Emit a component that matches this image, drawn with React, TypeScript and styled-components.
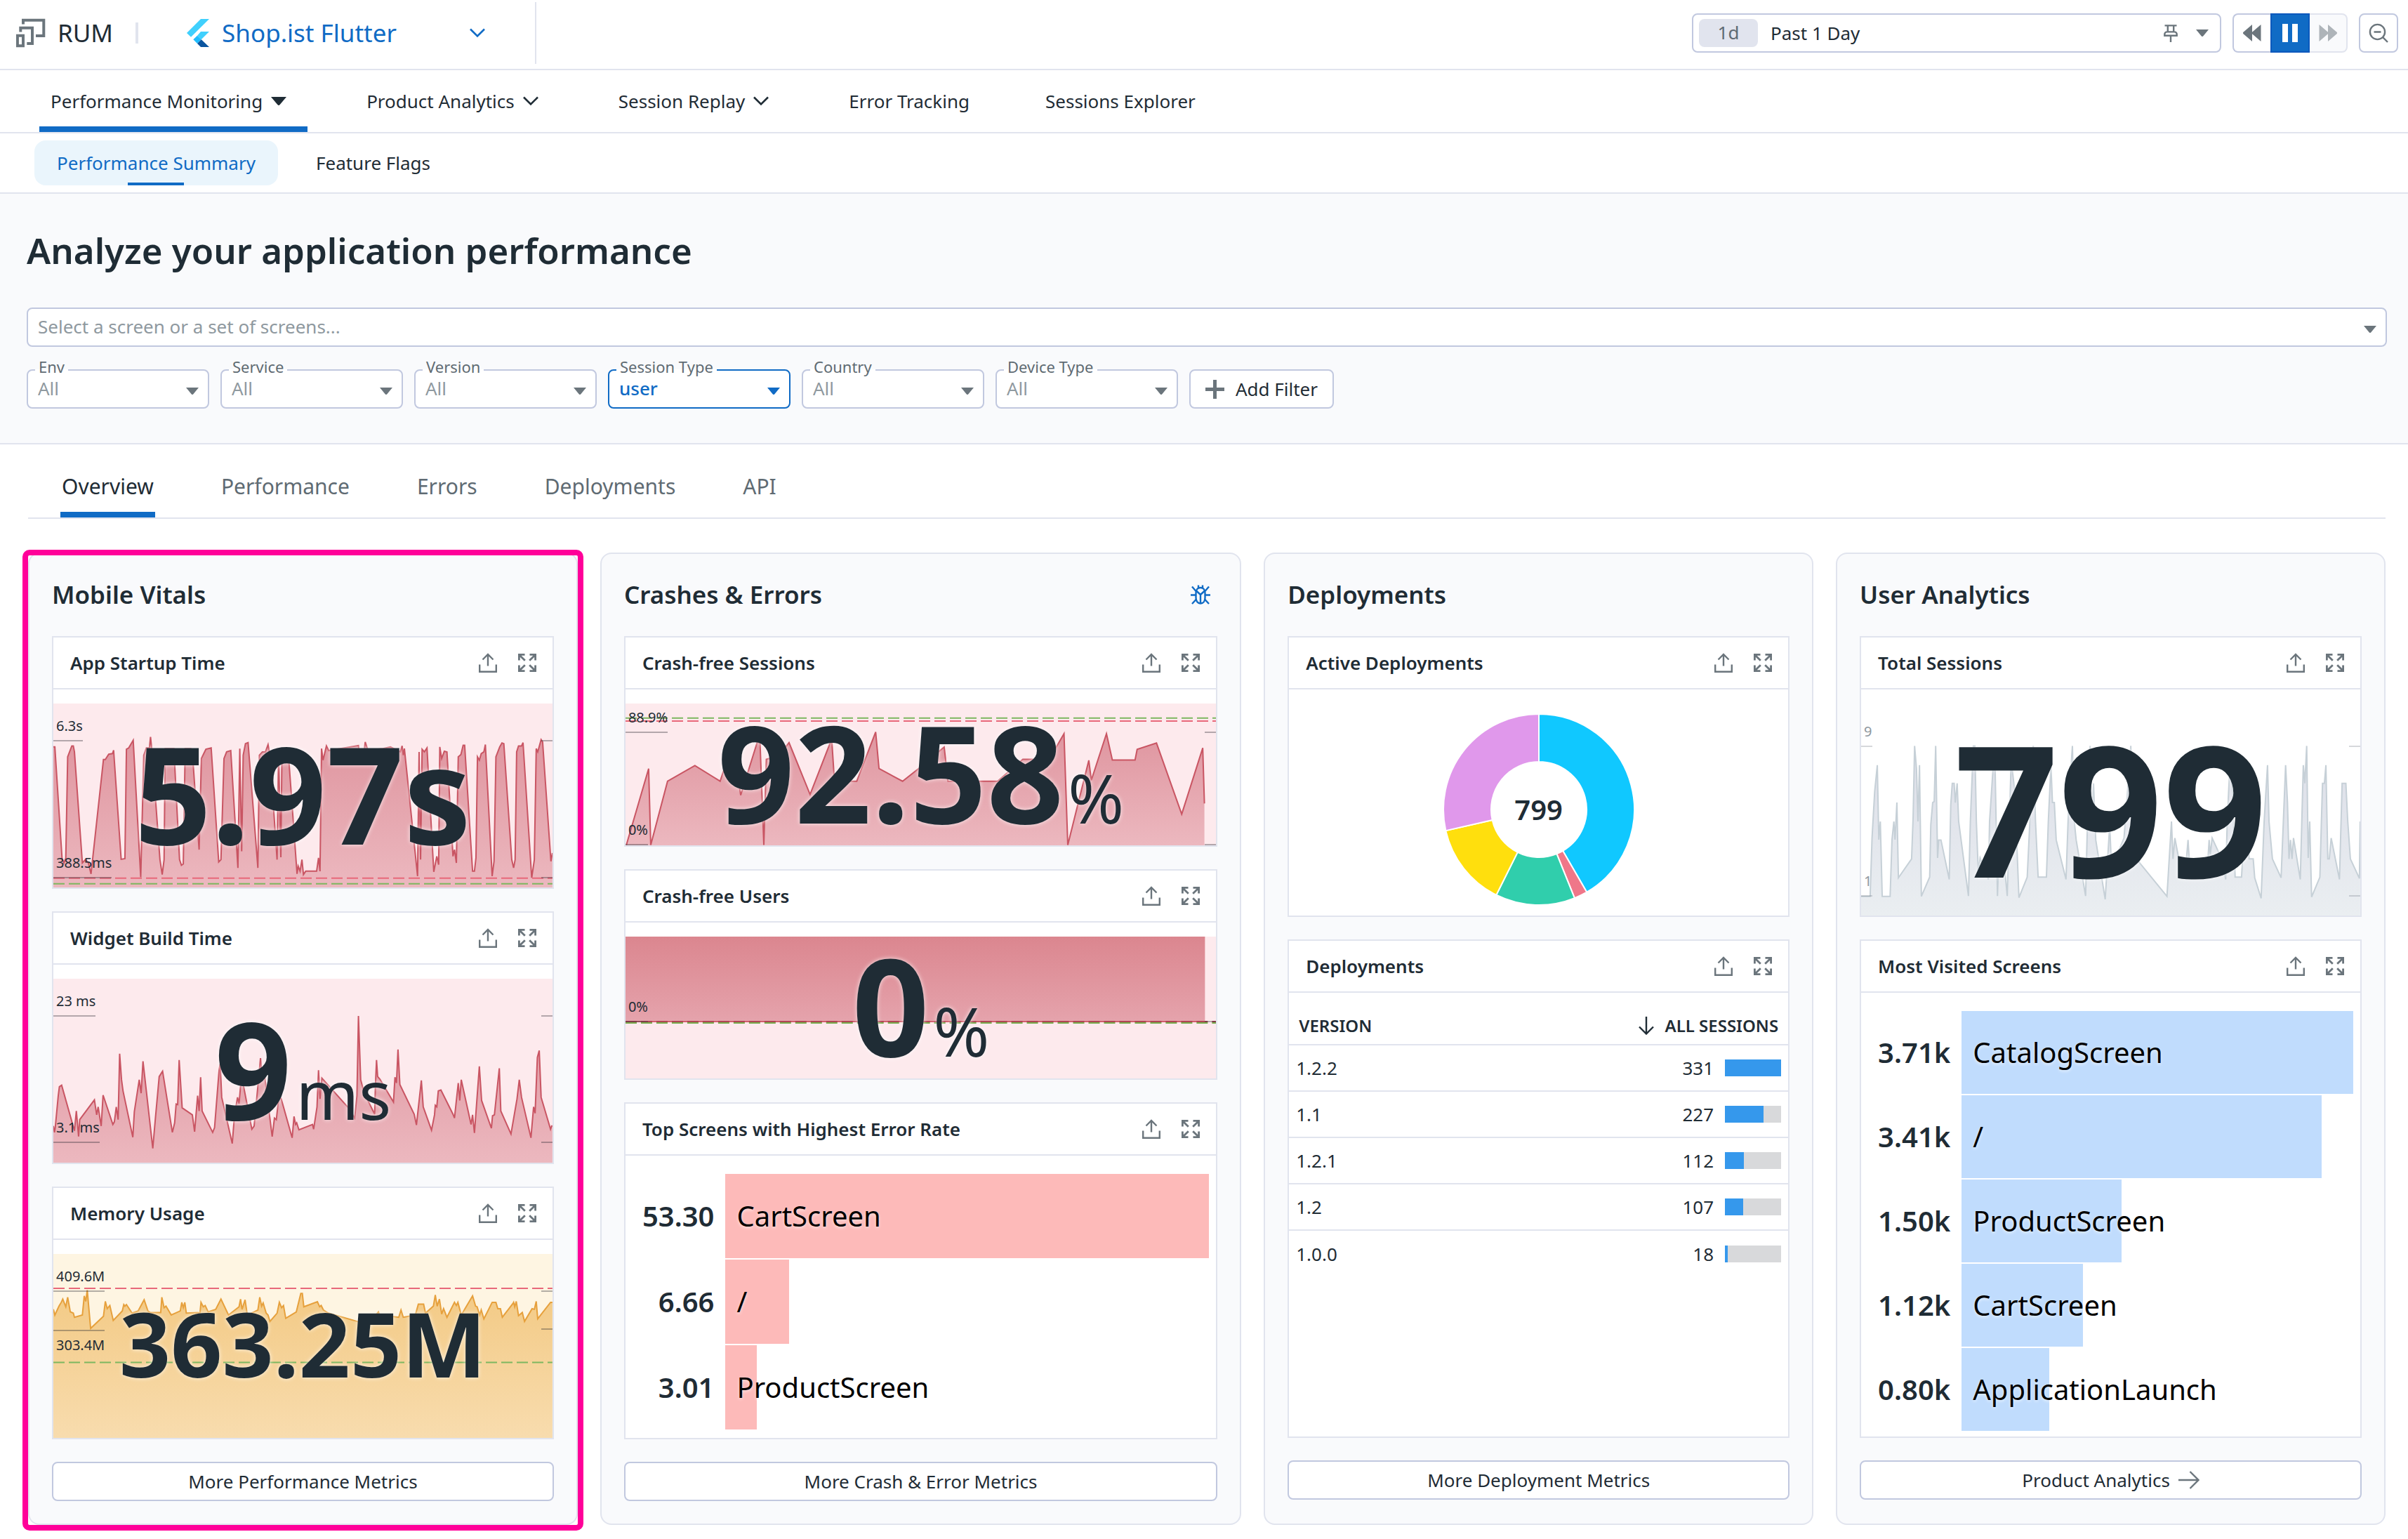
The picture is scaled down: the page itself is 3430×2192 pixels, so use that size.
import React, { useId } from "react";
import styled, { createGlobalStyle, css } from "styled-components";

const color = {
  ink: "#1f2c35",
  inkSoft: "#5f6b73",
  icon: "#6b757c",
  placeholder: "#8f999f",
  line: "#e1e4ee",
  control: "#c1c8df",
  blue: "#106bc5",
  blueTint: "#eaf5fc",
  surface: "#f9fafc",
  pink: "#ff0099",
};

const GlobalStyle = createGlobalStyle`
  *, *::before, *::after { box-sizing: border-box; }
  body {
    margin: 0;
    background: #fff;
    color: ${color.ink};
    font-family: "Noto Sans", "Open Sans", sans-serif;
    font-size: 26px;
    line-height: 36px;
  }
  button, select { font: inherit; color: inherit; }
  h1, h2, h3, p { margin: 0; }
  svg { display: block; flex: none; }
`;

/* ---------- icons ---------- */

const RumIcon = () => (
  <svg width="43" height="42" viewBox="0 0 43 42" fill="none" stroke={color.icon} strokeWidth="4" aria-hidden="true">
    <path d="M10 8.5V2.7h29.3V25H28" />
    <path d="M6.3 19.5v-5.8H23V36h-7.7" />
    <path d="M1.9 24.7H10v14.6H1.9z" />
  </svg>
);

const FlutterIcon = () => (
  <svg width="32" height="40" viewBox="0 0 32 40" aria-hidden="true">
    <path fill="#40d0fd" d="M20 0h12L6 25.7 0 20zM20 18h12L20.7 29.3 15 23.7z" />
    <path fill="#1fbcfd" d="M15 23.7l5.7 5.6L15 35l-5.7-5.7z" />
    <path fill="#0b559f" d="M20.7 29.3L32 40H20l-5-5z" />
  </svg>
);

const Chevron = ({ size = 22 }: { size?: number }) => (
  <svg width={size} height="14" viewBox="0 0 22 14" fill="none" stroke="currentColor" strokeWidth="2.6" aria-hidden="true">
    <path d="M1 1.5l10 10 10-10" />
  </svg>
);

const Caret = ({ width = 18 }: { width?: number }) => (
  <svg width={width} height={width === 18 ? 10 : 12} viewBox="0 0 18 10" preserveAspectRatio="none" fill="currentColor" aria-hidden="true">
    <path d="M0 0h18l-7.6 9.2a1.8 1.8 0 0 1-2.8 0z" />
  </svg>
);

const PinIcon = () => (
  <svg width="20" height="25" viewBox="0 0 20 25" fill="none" stroke="currentColor" strokeWidth="2.4" aria-hidden="true">
    <path d="M1.5 1.4h17M5.8 1.4v9M14.2 1.4v9M10 16v9M1.3 15.8v-2c0-2 1.600-3.400 3.600-3.400h10.200c2 0 3.600 1.400 3.600 3.400v2z" />
  </svg>
);

const RewindIcon = () => (
  <svg width="26" height="24" viewBox="0 0 26 24" fill="currentColor" aria-hidden="true">
    <path d="M13 0v24L.5 13.200a1.600 1.600 0 0 1 0-2.400zM25.500 0v24L13 13.200a1.600 1.600 0 0 1 0-2.400z" />
  </svg>
);

const ForwardIcon = () => (
  <svg width="26" height="24" viewBox="0 0 26 24" fill="currentColor" aria-hidden="true">
    <path d="M13 0v24l12.500-10.800a1.600 1.600 0 0 0 0-2.400zM.5 0v24L13 13.200a1.600 1.600 0 0 0 0-2.400z" />
  </svg>
);

const PauseIcon = () => (
  <svg width="22" height="26" viewBox="0 0 22 26" fill="currentColor" aria-hidden="true">
    <path d="M0 0h8v26H0zM14 0h8v26h-8z" />
  </svg>
);

const ZoomOutIcon = () => (
  <svg width="28" height="28" viewBox="0 0 28 28" fill="none" stroke="currentColor" strokeWidth="2.4" aria-hidden="true">
    <circle cx="12.500" cy="12.500" r="10.600" />
    <path d="M7.500 12.500h10M20.200 20.200l6.800 6.800" />
  </svg>
);

const PlusIcon = () => (
  <svg width="27" height="27" viewBox="0 0 27 27" stroke={color.icon} strokeWidth="5" aria-hidden="true">
    <path d="M13.500 0v27M0 13.500h27" />
  </svg>
);

const ShareIcon = () => (
  <svg width="26" height="28" viewBox="0 0 26 28" fill="none" stroke="currentColor" strokeWidth="2.400" aria-hidden="true">
    <path d="M13 18.500V2M5.500 9.500L13 2l7.500 7.500M1.200 16.500v10.200h23.600V16.500" />
  </svg>
);

const ExpandIcon = () => (
  <svg width="26" height="26" viewBox="0 0 26 26" fill="none" stroke="currentColor" strokeWidth="2.800" aria-hidden="true">
    <path d="M1.400 9.500V1.400h8.100M1.400 1.400l8.400 8.400M16.500 1.400h8.100v8.100M24.600 1.400l-8.400 8.400M1.400 16.500v8.100h8.100M1.400 24.600l8.400-8.400M24.600 16.500v8.100h-8.100M24.600 24.600l-8.400-8.400" />
  </svg>
);

const BugIcon = () => (
  <svg width="28" height="28" viewBox="0 0 28 28" fill="none" stroke="currentColor" strokeWidth="2.400" aria-hidden="true">
    <path d="M7.500 11.500c0-4.500 2.600-7.500 6.500-7.500s6.500 3 6.500 7.500v7c0 4.600-2.600 8-6.500 8s-6.500-3.400-6.500-8z" />
    <path d="M14 14v12M8 8.500l6 5.500 6-5.500M11 4.500V.5M17 4.500V.5M0 14.500h7.500M20.500 14.500H28M7.500 9L2 2.500M20.500 9L26 2.500M8 20.500l-6 6.500M20 20.500l6 6.500" />
  </svg>
);

const SortArrow = () => (
  <svg width="22" height="26" viewBox="0 0 22 26" fill="none" stroke="currentColor" strokeWidth="2.400" aria-hidden="true">
    <path d="M11 0v24.500M1 14.500l10 10 10-10" />
  </svg>
);

const ArrowRight = () => (
  <svg width="30" height="26" viewBox="0 0 30 26" fill="none" stroke={color.icon} strokeWidth="2.400" aria-hidden="true">
    <path d="M0 13h28.500M16.500 1l12 12-12 12" />
  </svg>
);

/* ---------- top bar ---------- */

const TopBar = styled.header`
  display: flex;
  align-items: center;
  height: 100px;
  padding: 0 14px 4px 23px;
  border-bottom: 2px solid ${color.line};
`;

const Product = styled.div`
  display: flex;
  align-items: center;
  gap: 16px;
  padding-right: 32px;
  font-size: 35px;
`;

const Divider = styled.span`
  width: 4px;
  height: 30px;
  background: ${color.line};
`;

const AppPicker = styled.button`
  display: flex;
  align-items: center;
  gap: 18px;
  width: 567px;
  height: 88px;
  padding: 0 70px 0 69px;
  border: 0;
  border-right: 2px solid ${color.line};
  background: none;
  color: ${color.blue};
  font-size: 35px;
  text-align: left;
`;

const AppName = styled.span`
  flex: 1;
`;

const TimeControls = styled.div`
  display: flex;
  gap: 16px;
  margin-left: auto;
`;

const TimeRange = styled.button`
  display: flex;
  align-items: center;
  width: 754px;
  height: 56px;
  padding: 0 16px 0 8px;
  border: 2px solid ${color.control};
  border-radius: 8px;
  background: #fff;
`;

const RangeBadge = styled.span`
  width: 84px;
  height: 40px;
  margin-right: 18px;
  border-radius: 8px;
  background: ${color.line};
  color: ${color.inkSoft};
  line-height: 38px;
  text-align: center;
`;

const RangeTools = styled.span`
  display: flex;
  align-items: center;
  gap: 26px;
  margin-left: auto;
  color: ${color.icon};
`;

const Playback = styled.div`
  display: flex;
  width: 164px;
`;

const IconButton = styled.button<{ $tone?: "primary" | "disabled"; $edge?: "left" | "right" }>`
  display: flex;
  flex: 1;
  align-items: center;
  justify-content: center;
  min-width: 56px;
  height: 56px;
  padding: 0;
  border: 2px solid ${color.control};
  border-radius: 8px;
  background: #fff;
  color: ${color.icon};
  ${({ $edge }) => $edge === "left" && css`border-right: 0; border-radius: 8px 0 0 8px; min-width: 52px;`}
  ${({ $edge }) => $edge === "right" && css`border-left: 0; border-radius: 0 8px 8px 0; min-width: 52px;`}
  ${({ $tone }) => $tone === "primary" && css`border-color: #0c58bd; border-radius: 0; background: ${color.blue}; color: #fff;`}
  ${({ $tone }) => $tone === "disabled" && css`border-color: ${color.line}; background: ${color.surface}; color: #aeb4b9;`}
`;

/* ---------- navigation ---------- */

const MainNav = styled.nav`
  display: flex;
  gap: 68px;
  height: 90px;
  padding: 0 56px;
  border-bottom: 2px solid ${color.line};
`;

const NavLink = styled.a<{ $active?: boolean }>`
  display: flex;
  align-items: center;
  gap: 12px;
  padding: 0 30px 0 16px;
  border-bottom: 8px solid ${({ $active }) => ($active ? color.blue : "transparent")};
  border-top: 8px solid transparent;
  color: ${color.ink};
  text-decoration: none;
`;

const PlainNavLink = styled(NavLink)`
  padding-right: 24px;
`;

const SubNav = styled.nav`
  display: flex;
  align-items: center;
  gap: 22px;
  height: 86px;
  padding: 0 49px;
  border-bottom: 2px solid ${color.line};
`;

const SubLink = styled.a<{ $active?: boolean }>`
  display: flex;
  flex-direction: column;
  align-items: center;
  height: 64px;
  padding: 14px 32px 0;
  border-radius: 16px;
  text-decoration: none;
  color: ${({ $active }) => ($active ? color.blue : color.ink)};
  background: ${({ $active }) => ($active ? color.blueTint : "none")};
  &::after {
    content: "";
    width: 80px;
    height: 4px;
    margin-top: auto;
    background: ${({ $active }) => ($active ? color.blue : "none")};
  }
`;

/* ---------- filters ---------- */

const FilterSection = styled.section`
  height: 357px;
  padding: 0 30px 0 38px;
  border-bottom: 2px solid ${color.line};
  background: ${color.surface};
`;

const PageTitle = styled.h1`
  padding: 44px 0 46px;
  font-size: 51px;
  font-weight: 600;
  line-height: 72px;
`;

const Field = styled.div<{ $active?: boolean; $narrow?: boolean }>`
  position: relative;
  display: flex;
  width: ${({ $narrow }) => ($narrow ? "260px" : "100%")};
  color: ${({ $active }) => ($active ? color.blue : color.icon)};
  & > svg {
    position: absolute;
    right: 15px;
    top: 26px;
    pointer-events: none;
  }
`;

const Select = styled.select<{ $active?: boolean }>`
  width: 100%;
  height: 56px;
  padding: 0 40px 2px 14px;
  appearance: none;
  border: 2px solid ${({ $active }) => ($active ? color.blue : color.control)};
  border-radius: 8px;
  background: #fff;
  color: ${({ $active }) => ($active ? color.blue : color.placeholder)};
  font-weight: ${({ $active }) => ($active ? 500 : 400)};
`;

const FieldLabel = styled.label`
  position: absolute;
  top: -16px;
  left: 12px;
  padding: 0 5px;
  background: linear-gradient(${color.surface} 16px, #fff 16px);
  color: ${color.inkSoft};
  font-size: 22px;
  line-height: 24px;
`;

const FilterRow = styled.div`
  display: flex;
  gap: 16px;
  margin-top: 32px;
`;

const AddFilter = styled.button`
  display: flex;
  align-items: center;
  justify-content: center;
  gap: 16px;
  width: 206px;
  height: 56px;
  padding: 0;
  border: 2px solid ${color.control};
  border-radius: 8px;
  background: #fff;
`;

/* ---------- content ---------- */

const Content = styled.main`
  padding: 0 32px 20px 40px;
`;

const Tabs = styled.div`
  display: flex;
  gap: 92px;
  height: 106px;
  margin-bottom: 48px;
  padding: 0 46px;
  border-bottom: 2px solid ${color.line};
`;

const Tab = styled.button<{ $active?: boolean }>`
  padding: 24px 2px 0;
  border: 0;
  border-bottom: 8px solid ${({ $active }) => ($active ? color.blue : "transparent")};
  background: none;
  color: ${({ $active }) => ($active ? color.ink : color.inkSoft)};
  font-size: 30px;
`;

const Panels = styled.div`
  display: grid;
  grid-template-columns: 6fr 7fr 6fr 6fr;
  gap: 32px;
`;

const Panel = styled.section<{ $highlighted?: boolean }>`
  position: relative;
  display: flex;
  flex-direction: column;
  gap: 32px;
  min-width: 0;
  padding: 0 32px 32px;
  border: 2px solid ${color.line};
  border-radius: 16px;
  background: ${color.surface};
  ${({ $highlighted }) =>
    $highlighted &&
    css`
      &::after {
        content: "";
        position: absolute;
        inset: -6px -10px -10px;
        border: 8px solid ${color.pink};
        border-radius: 10px;
        pointer-events: none;
      }
    `}
`;

const PanelHeader = styled.header`
  display: flex;
  align-items: center;
  justify-content: space-between;
  height: 117px;
  margin-bottom: -32px;
  padding: 0 10px 2px 0;
  color: ${color.blue};
`;

const PanelTitle = styled.h2`
  color: ${color.ink};
  font-size: 35px;
  font-weight: 600;
  line-height: 48px;
`;

const PanelAction = styled.button`
  padding: 0;
  border: 0;
  background: none;
  color: ${color.blue};
`;

const CardBox = styled.article<{ $minHeight?: number }>`
  min-height: ${({ $minHeight }) => ($minHeight ? `${$minHeight}px` : "auto")};
  border: 2px solid ${color.line};
  background: #fff;
`;

const CardHeader = styled.header`
  display: flex;
  align-items: center;
  gap: 30px;
  height: 74px;
  padding: 0 23px 0 24px;
  border-bottom: 2px solid ${color.line};
`;

const CardTitle = styled.h3`
  flex: 1;
  font-size: 26px;
  font-weight: 600;
`;

const CardTool = styled.button`
  padding: 0;
  border: 0;
  background: none;
  color: ${color.icon};
`;

const MoreButton = styled.button`
  display: flex;
  align-items: center;
  justify-content: center;
  gap: 12px;
  height: 56px;
  border: 2px solid ${color.control};
  border-radius: 8px;
  background: #fff;
`;

/* ---------- metric chart ---------- */

const ChartFrame = styled.div<{ $height: number; $background: string }>`
  position: relative;
  display: grid;
  height: ${({ $height }) => $height}px;
  margin-top: 20px;
  background: ${({ $background }) => $background};
  & > * { grid-area: 1 / 1; }
`;

const Plot = styled.svg`
  width: 100%;
  height: 100%;
  min-height: 0;
`;

const tickColor = (muted?: boolean) => (muted ? "rgba(90, 100, 110, 0.25)" : "rgba(40, 40, 50, 0.35)");

const AxisLabel = styled.span<{ $y: number; $below?: boolean; $muted?: boolean }>`
  position: absolute;
  left: 0;
  top: ${({ $y, $below }) => ($below ? $y : $y - 34)}px;
  padding: ${({ $below }) => ($below ? "8px 0 0 4px" : "0 0 8px 4px")};
  color: ${({ $muted }) => ($muted ? color.placeholder : color.ink)};
  font-size: 20px;
  line-height: 24px;
  border: 0 solid ${({ $muted }) => tickColor($muted)};
  border-${({ $below }) => ($below ? "top" : "bottom")}-width: 2px;
`;

const EndTick = styled.span<{ $y: number; $muted?: boolean }>`
  position: absolute;
  right: 0;
  top: ${({ $y }) => $y - 2}px;
  width: 16px;
  height: 2px;
  background: ${({ $muted }) => tickColor($muted)};
`;

const Metric = styled.p<{ $size: number }>`
  position: relative;
  display: flex;
  align-items: baseline;
  justify-content: center;
  align-self: center;
  padding-bottom: 8px;
  font-size: ${({ $size }) => $size}px;
  font-weight: 700;
  line-height: 1;
  text-shadow: 0 0 6px rgba(255, 255, 255, 0.8);
`;

const Unit = styled.span`
  margin-left: 6px;
  font-size: 96px;
  font-weight: 400;
`;

type Theme = "red" | "amber" | "grey";

const themes: Record<Theme, { background: string; line: string; top: string; bottom: string }> = {
  red: { background: "#fdeaed", line: "#c95563", top: "#df959f", bottom: "#ecb8bf" },
  amber: { background: "#fef5e2", line: "#e6a03c", top: "#f3ca85", bottom: "#f8dcae" },
  grey: { background: "#fff", line: "#c6d0d7", top: "#dcdee8", bottom: "#eaeef1" },
};

interface AxisMark { label: string; y: number; below?: boolean }
interface Threshold { y: number; color: string }

interface ChartProps {
  theme: Theme;
  height: number;
  /** x, y, width and height of the data's own coordinate space */
  view: [number, number, number, number];
  points: string;
  marks: AxisMark[];
  thresholds?: Threshold[];
  value: string;
  unit?: string;
  size: number;
}

function MetricChart({ theme, height, view, points, marks, thresholds = [], value, unit, size }: ChartProps) {
  const id = useId();
  const t = themes[theme];
  const [x, y, w, h] = view;
  const list = points.trim().split(/\s+/);
  const firstX = list[0].split(",")[0];
  const lastX = list[list.length - 1].split(",")[0];
  const muted = theme === "grey";
  return (
    <ChartFrame $height={height} $background={t.background}>
      <Plot viewBox={view.join(" ")} preserveAspectRatio="none" aria-hidden="true">
        <defs>
          <linearGradient id={id} x1="0" y1="0" x2="0" y2="1">
            <stop offset="0" stopColor={t.top} />
            <stop offset="1" stopColor={t.bottom} />
          </linearGradient>
        </defs>
        <polygon points={`${firstX},${y + h} ${points} ${lastX},${y + h}`} fill={`url(#${id})`} />
        <polyline points={points} fill="none" stroke={t.line} strokeWidth="2" vectorEffect="non-scaling-stroke" />
        {thresholds.map((line) => (
          <path key={line.y} d={`M${x} ${line.y}h${w}`} stroke={line.color} strokeWidth="2" strokeDasharray="16 6" vectorEffect="non-scaling-stroke" />
        ))}
      </Plot>
      {marks.map((m) => (
        <React.Fragment key={m.label}>
          <AxisLabel $y={m.y} $below={m.below} $muted={muted}>{m.label}</AxisLabel>
          <EndTick $y={m.y} $muted={muted} />
        </React.Fragment>
      ))}
      <Metric $size={size}>
        {value}
        {unit && <Unit>{unit}</Unit>}
      </Metric>
    </ChartFrame>
  );
}

const startupPoints =
  "105,625 109,625 128,960 133,975 138,960 143,655 154,622 158,622 161,640 182,975 190,965 198,975 205,1008 238,663 243,663 252,647 262,645 265,635 285,964 295,962 299,632 305,628 317,605 337,1018 345,650 352,628 360,628 363,595 367,640 388,965 394,1010 399,965 402,630 425,630 440,965 445,982 450,978 455,630 470,630 474,640 492,935 498,660 510,632 524,628 544,972 550,965 558,660 565,640 576,636 595,990 600,630 605,940 609,650 615,615 622,612 648,990 652,650 660,640 668,640 675,618 680,650 699,965 703,640 709,958 712,632 728,630 752,1008 755,985 760,1000 765,965 769,1010 775,1000 804,1000 809,960 813,1000 817,630 821,665 830,622 836,636 915,621 918,650 930,640 933,610 940,635 980,630 1000,625 1026,640 1031,622 1034,650 1037,630 1072,1015 1076,640 1080,965 1084,632 1090,640 1097,628 1115,1002 1123,955 1128,980 1131,625 1136,660 1143,638 1150,640 1166,955 1170,935 1175,975 1180,655 1187,648 1193,620 1197,620 1218,1000 1223,1000 1227,960 1231,655 1236,665 1241,645 1248,640 1252,618 1270,1015 1275,970 1280,655 1290,625 1296,613 1301,615 1322,965 1327,990 1331,965 1335,640 1340,622 1348,622 1352,612 1375,1020 1382,965 1387,630 1391,640 1400,603 1404,610 1426,970 1430,945";

const widgetPoints =
  "105,275 108,295 110,280 118,180 121,152 127,147 161,290 166,228 172,308 175,255 214,193 220,240 224,215 232,275 237,178 263,270 267,262 272,215 277,255 281,48 286,130 290,165 316,310 320,230 333,130 338,172 343,72 369,345 376,250 386,120 395,103 421,295 427,265 431,206 435,208 439,68 447,218 474,240 480,293 488,180 492,228 496,122 500,228 528,295 533,280 545,100 548,80 552,185 580,330 586,240 594,185 598,205 602,150 606,120 610,150 632,285 638,275 655,62 658,110 663,90 686,308 692,250 697,255 704,180 710,190 739,312 744,245 748,270 751,265 757,287 793,270 796,285 805,215 809,100 813,190 818,125 890,220 905,250 911,180 915,-70 921,130 930,170 958,238 960,150 963,68 966,120 972,128 1008,200 1012,122 1016,140 1020,35 1025,145 1063,238 1069,272 1082,132 1087,215 1109,288 1117,240 1119,210 1123,215 1127,165 1134,162 1166,238 1170,250 1180,140 1184,195 1188,130 1214,270 1218,240 1223,297 1236,88 1242,195 1268,282 1271,243 1276,240 1289,94 1293,228 1320,300 1336,190 1342,130 1348,185 1373,312 1380,215 1384,235 1390,60 1395,38 1400,185 1425,285 1428,275 1430,275";

const memoryPoints =
  "105,850 109,868 120,840 126,828 130,818 138,842 143,812 150,858 158,862 161,875 182,868 187,808 191,825 195,790 204,910 238,872 243,825 248,848 255,838 264,885 288,855 292,835 295,840 299,835 314,862 330,855 346,820 356,855 362,860 390,860 393,812 399,845 404,840 418,868 442,855 446,828 450,845 454,828 458,862 490,860 494,865 497,828 503,842 508,838 516,858 536,850 550,818 570,868 598,842 602,818 606,850 614,820 620,868 648,852 653,812 658,840 662,830 670,862 675,868 680,888 699,862 705,828 711,845 716,838 722,878 750,858 762,800 766,800 770,842 806,826 812,842 816,838 822,852 835,862 912,888 916,890 930,875 960,870 968,858 973,875 1000,872 1022,875 1028,852 1034,875 1066,868 1074,834 1088,834 1093,862 1114,840 1119,805 1124,840 1130,818 1136,865 1141,848 1150,875 1170,828 1175,838 1179,828 1188,868 1218,808 1226,840 1230,842 1237,868 1241,852 1248,880 1270,828 1280,828 1285,848 1292,848 1297,875 1325,832 1327,828 1330,842 1334,825 1340,870 1350,860 1356,888 1376,848 1382,850 1387,825 1391,880 1425,828 1430,828";

const crashSessionPoints =
  "87,920 140,690 145,920 185,728 250,681 310,728 340,612 359,770 398,612 405,612 414,920 420,662 450,650 474,612 524,768 572,612 576,612 582,728 635,728 680,580 688,690 744,728 782,690 843,625 852,728 970,728 1030,662 1055,662 1080,690 1128,585 1137,920 1187,665 1193,725 1229,585 1243,664 1297,664 1302,632 1348,613 1408,827 1458,628 1462,795";

const totalSessionPoints =
  "114,1076 138,1076 143,900 150,760 157,680 161,905 165,850 170,1076 191,1076 196,905 201,850 204,905 209,793 213,1020 248,963 252,840 256,622 261,690 265,850 269,680 274,1076 296,1018 299,860 304,793 308,790 312,622 317,960 320,906 326,906 348,1025 352,800 356,735 361,735 364,793 369,735 373,850 399,1075 404,850 412,622 416,622 420,850 425,1000 430,960 452,1025 455,850 466,660 470,700 476,1075 483,850 488,906 502,1075 512,680 516,700 522,760 533,1080 555,1018 562,850 571,622 577,850 584,1018 606,1018 611,850 618,680 622,793 627,793 632,906 658,1025 665,800 675,622 680,850 685,906 710,1075 715,850 722,622 726,850 731,735 737,906 762,1085 774,860 780,1020 790,960 812,900 820,780 830,622 836,850 850,970 926,1076 938,850 942,963 947,900 957,960 970,1000 978,960 982,906 987,1000 1010,1000 1032,1015 1038,906 1041,950 1046,900 1070,960 1082,1025 1086,850 1093,680 1100,760 1107,1018 1124,1018 1130,900 1140,850 1144,963 1155,963 1159,1020 1176,1082 1184,850 1193,680 1197,850 1206,963 1229,1020 1235,850 1241,680 1246,793 1250,963 1254,906 1258,963 1262,900 1280,1025 1284,850 1288,680 1292,735 1297,622 1301,960 1305,850 1310,1078 1332,1018 1336,850 1339,735 1344,735 1348,680 1353,963 1357,963 1362,900 1384,1025 1391,735 1401,735 1406,850 1413,963 1437,1022 1439,850";

/* Crash-free users is flat at zero, so its area hangs from the top of the plot. */
function CrashFreeUsersChart() {
  const id = useId();
  return (
    <ChartFrame $height={202} $background={themes.red.background}>
      <Plot viewBox="0 0 842 202" preserveAspectRatio="none" aria-hidden="true">
        <defs>
          <linearGradient id={id} x1="0" y1="0" x2="0" y2="1">
            <stop offset="0" stopColor="#db868f" />
            <stop offset="1" stopColor="#e5a3ac" />
          </linearGradient>
        </defs>
        <path d="M0 0h826v121H0z" fill={`url(#${id})`} />
        <path d="M0 121h826" stroke="#d0606d" strokeWidth="2" />
        <path d="M0 121h842" stroke="#b04553" strokeWidth="2" strokeDasharray="16 6" />
        <path d="M0 123h842" stroke="#76ab4c" strokeWidth="2" strokeDasharray="16 6" />
      </Plot>
      <AxisLabel $y={122}>0%</AxisLabel>
      <EndTick $y={122} />
      <Metric $size={192}>0<Unit>%</Unit></Metric>
    </ChartFrame>
  );
}

/* ---------- top list ---------- */

const TopListBox = styled.ol`
  display: grid;
  grid-template-columns: auto 1fr;
  row-gap: 2px;
  margin: 0;
  padding: 26px 10px 8px 0;
  list-style: none;
`;

const TopListRow = styled.li<{ $height: number }>`
  display: grid;
  grid-column: 1 / -1;
  grid-template-columns: subgrid;
  align-items: center;
  height: ${({ $height }) => $height}px;
  font-size: 40px;
`;

const TopListValue = styled.span`
  padding: 0 16px 0 24px;
  font-weight: 600;
  text-align: right;
`;

const TopListTrack = styled.span`
  display: grid;
  align-items: center;
  height: 100%;
  & > * { grid-area: 1 / 1; }
`;

const TopListBar = styled.span<{ $fill: string }>`
  height: 100%;
  background: ${({ $fill }) => $fill};
`;

const TopListName = styled.span`
  padding-left: 16px;
  color: #000;
  text-shadow: 0 2px 4px rgba(255, 255, 255, 0.6);
`;

interface TopListItem { name: string; value: string; share: number }

function TopList({ items, fill, rowHeight }: { items: TopListItem[]; fill: string; rowHeight: number }) {
  return (
    <TopListBox>
      {items.map((item) => (
        <TopListRow key={item.name} $height={rowHeight}>
          <TopListValue>{item.value}</TopListValue>
          <TopListTrack>
            <TopListBar $fill={fill} style={{ width: `${item.share}%` }} />
            <TopListName>{item.name}</TopListName>
          </TopListTrack>
        </TopListRow>
      ))}
    </TopListBox>
  );
}

const errorScreens: TopListItem[] = [
  { name: "CartScreen", value: "53.30", share: 100 },
  { name: "/", value: "6.66", share: 13.2 },
  { name: "ProductScreen", value: "3.01", share: 6.4 },
];

const visitedScreens: TopListItem[] = [
  { name: "CatalogScreen", value: "3.71k", share: 100 },
  { name: "/", value: "3.41k", share: 92 },
  { name: "ProductScreen", value: "1.50k", share: 40.9 },
  { name: "CartScreen", value: "1.12k", share: 31 },
  { name: "ApplicationLaunch", value: "0.80k", share: 22.4 },
];

/* ---------- deployments ---------- */

const DonutFrame = styled.div`
  display: grid;
  place-items: center;
  height: 302px;
  margin-top: 20px;
  & > * { grid-area: 1 / 1; }
`;

const DonutTotal = styled.strong`
  font-size: 40px;
  font-weight: 600;
`;

const donutSlices = [
  { count: 331, fill: "#10c8ff" },
  { count: 18, fill: "#ef7789" },
  { count: 107, fill: "#30ceac" },
  { count: 112, fill: "#ffdf0d" },
  { count: 227, fill: "#e098eb" },
];

function Donut() {
  const total = donutSlices.reduce((sum, s) => sum + s.count, 0);
  const at = (turn: number, r: number) => {
    const a = turn * 2 * Math.PI;
    return `${(136 + r * Math.sin(a)).toFixed(2)} ${(136 - r * Math.cos(a)).toFixed(2)}`;
  };
  let from = 0;
  return (
    <DonutFrame>
      <svg width="272" height="272" viewBox="0 0 272 272" stroke="#fff" strokeWidth="2" aria-hidden="true">
        {donutSlices.map((s) => {
          const start = from;
          const end = (from += s.count / total);
          const large = end - start > 0.5 ? 1 : 0;
          return (
            <path
              key={s.fill}
              fill={s.fill}
              d={`M${at(start, 136)}A136 136 0 ${large} 1 ${at(end, 136)}L${at(end, 68)}A68 68 0 ${large} 0 ${at(start, 68)}Z`}
            />
          );
        })}
      </svg>
      <DonutTotal>799</DonutTotal>
    </DonutFrame>
  );
}

const Table = styled.table`
  width: 100%;
  margin-top: 20px;
  border-collapse: collapse;
  th {
    height: 54px;
    padding: 0 14px;
    border-bottom: 2px solid ${color.line};
    font-size: 24px;
    font-weight: 600;
    text-align: left;
  }
  td {
    height: 66px;
    padding: 0 10px;
    border-bottom: 2px solid ${color.line};
  }
  tbody tr:last-child td { border-bottom: 0; }
`;

const SortHeading = styled.span`
  display: flex;
  align-items: center;
  justify-content: flex-end;
  gap: 16px;
`;

const SessionCell = styled.span`
  display: flex;
  align-items: center;
  justify-content: flex-end;
  gap: 16px;
`;

const Meter = styled.span`
  width: 80px;
  height: 24px;
  background: #d8d9db;
`;

const MeterFill = styled.span`
  display: block;
  height: 100%;
  background: #3598ec;
`;

const deployments = [
  { version: "1.2.2", sessions: 331 },
  { version: "1.1", sessions: 227 },
  { version: "1.2.1", sessions: 112 },
  { version: "1.2", sessions: 107 },
  { version: "1.0.0", sessions: 18 },
];

function DeploymentsTable() {
  return (
    <Table>
      <thead>
        <tr>
          <th scope="col">VERSION</th>
          <th scope="col">
            <SortHeading><SortArrow />ALL SESSIONS</SortHeading>
          </th>
        </tr>
      </thead>
      <tbody>
        {deployments.map((d) => (
          <tr key={d.version}>
            <td>{d.version}</td>
            <td>
              <SessionCell>
                {d.sessions}
                <Meter><MeterFill style={{ width: `${(d.sessions / 331) * 100}%` }} /></Meter>
              </SessionCell>
            </td>
          </tr>
        ))}
      </tbody>
    </Table>
  );
}

/* ---------- composition ---------- */

function Card({ title, minHeight, children }: { title: string; minHeight?: number; children: React.ReactNode }) {
  return (
    <CardBox $minHeight={minHeight}>
      <CardHeader>
        <CardTitle>{title}</CardTitle>
        <CardTool type="button" aria-label={`Export ${title}`}><ShareIcon /></CardTool>
        <CardTool type="button" aria-label={`Expand ${title}`}><ExpandIcon /></CardTool>
      </CardHeader>
      {children}
    </CardBox>
  );
}

const filters = [
  { label: "Env", value: "All" },
  { label: "Service", value: "All" },
  { label: "Version", value: "All" },
  { label: "Session Type", value: "user", active: true },
  { label: "Country", value: "All" },
  { label: "Device Type", value: "All" },
];

const red = "#e8687a";
const green = "#7db760";

export default function App() {
  return (
    <>
      <GlobalStyle />
      <TopBar>
        <Product><RumIcon />RUM</Product>
        <Divider />
        <AppPicker type="button">
          <FlutterIcon />
          <AppName>Shop.ist Flutter</AppName>
          <Chevron size={24} />
        </AppPicker>
        <TimeControls>
          <TimeRange type="button">
            <RangeBadge>1d</RangeBadge>
            Past 1 Day
            <RangeTools><PinIcon /><Caret /></RangeTools>
          </TimeRange>
          <Playback>
            <IconButton type="button" $edge="left" aria-label="Back"><RewindIcon /></IconButton>
            <IconButton type="button" $tone="primary" aria-label="Pause"><PauseIcon /></IconButton>
            <IconButton type="button" $tone="disabled" $edge="right" aria-label="Forward" disabled><ForwardIcon /></IconButton>
          </Playback>
          <IconButton type="button" aria-label="Zoom out"><ZoomOutIcon /></IconButton>
        </TimeControls>
      </TopBar>

      <MainNav>
        <NavLink href="#monitoring" $active>Performance Monitoring <Caret width={22} /></NavLink>
        <NavLink href="#analytics">Product Analytics <Chevron /></NavLink>
        <NavLink href="#replay">Session Replay <Chevron /></NavLink>
        <PlainNavLink href="#errors">Error Tracking</PlainNavLink>
        <PlainNavLink href="#explorer">Sessions Explorer</PlainNavLink>
      </MainNav>

      <SubNav>
        <SubLink href="#summary" $active>Performance Summary</SubLink>
        <SubLink href="#flags">Feature Flags</SubLink>
      </SubNav>

      <FilterSection>
        <PageTitle>Analyze your application performance</PageTitle>
        <Field>
          <Select aria-label="Screens"><option>Select a screen or a set of screens...</option></Select>
          <Caret />
        </Field>
        <FilterRow>
          {filters.map((f) => {
            const id = `filter-${f.label.toLowerCase().replace(" ", "-")}`;
            return (
              <Field key={f.label} $narrow $active={f.active}>
                <Select id={id} $active={f.active}><option>{f.value}</option></Select>
                <FieldLabel htmlFor={id}>{f.label}</FieldLabel>
                <Caret />
              </Field>
            );
          })}
          <AddFilter type="button"><PlusIcon />Add Filter</AddFilter>
        </FilterRow>
      </FilterSection>

      <Content>
        <Tabs role="tablist">
          {["Overview", "Performance", "Errors", "Deployments", "API"].map((name, i) => (
            <Tab key={name} type="button" role="tab" aria-selected={i === 0} $active={i === 0}>{name}</Tab>
          ))}
        </Tabs>

        <Panels>
          <Panel $highlighted>
            <PanelHeader><PanelTitle>Mobile Vitals</PanelTitle></PanelHeader>
            <Card title="App Startup Time">
              <MetricChart
                theme="red" height={262} view={[105, 494, 1325, 555]} points={startupPoints}
                marks={[{ label: "6.3s", y: 54 }, { label: "388.5ms", y: 249 }]}
                thresholds={[{ y: 1021, color: red }, { y: 1038, color: green }]}
                value="5.97s" size={192}
              />
            </Card>
            <Card title="Widget Build Time">
              <MetricChart
                theme="red" height={262} view={[105, -187, 1325, 577]} points={widgetPoints}
                marks={[{ label: "23 ms", y: 54 }, { label: "3.1 ms", y: 234 }]}
                value="9" unit="ms" size={192}
              />
            </Card>
            <Card title="Memory Usage">
              <MetricChart
                theme="amber" height={262} view={[105, 676, 1325, 578]} points={memoryPoints}
                marks={[{ label: "409.6M", y: 54 }, { label: "303.4M", y: 108, below: true }]}
                thresholds={[{ y: 784, color: red }, { y: 1017, color: green }]}
                value="363.25M" size={128}
              />
            </Card>
            <MoreButton type="button">More Performance Metrics</MoreButton>
          </Panel>

          <Panel>
            <PanelHeader>
              <PanelTitle>Crashes &amp; Errors</PanelTitle>
              <PanelAction type="button" aria-label="Error tracking"><BugIcon /></PanelAction>
            </PanelHeader>
            <Card title="Crash-free Sessions">
              <MetricChart
                theme="red" height={202} view={[85, 494, 1405, 427]} points={crashSessionPoints}
                marks={[{ label: "88.9%", y: 42 }, { label: "0%", y: 202 }]}
                thresholds={[{ y: 538, color: green }, { y: 547, color: red }]}
                value="92.58" unit="%" size={192}
              />
            </Card>
            <Card title="Crash-free Users"><CrashFreeUsersChart /></Card>
            <Card title="Top Screens with Highest Error Rate" minHeight={480}>
              <TopList items={errorScreens} fill="#fdbab9" rowHeight={120} />
            </Card>
            <MoreButton type="button">More Crash &amp; Error Metrics</MoreButton>
          </Panel>

          <Panel>
            <PanelHeader><PanelTitle>Deployments</PanelTitle></PanelHeader>
            <Card title="Active Deployments"><Donut /></Card>
            <Card title="Deployments" minHeight={710}><DeploymentsTable /></Card>
            <MoreButton type="button">More Deployment Metrics</MoreButton>
          </Panel>

          <Panel>
            <PanelHeader><PanelTitle>User Analytics</PanelTitle></PanelHeader>
            <Card title="Total Sessions">
              <MetricChart
                theme="grey" height={302} view={[114, 494, 1325, 640]} points={totalSessionPoints}
                marks={[{ label: "9", y: 62 }, { label: "1", y: 275 }]}
                value="799" size={260}
              />
            </Card>
            <Card title="Most Visited Screens">
              <TopList items={visitedScreens} fill="#c0dcfd" rowHeight={118} />
            </Card>
            <MoreButton type="button">Product Analytics <ArrowRight /></MoreButton>
          </Panel>
        </Panels>
      </Content>
    </>
  );
}
